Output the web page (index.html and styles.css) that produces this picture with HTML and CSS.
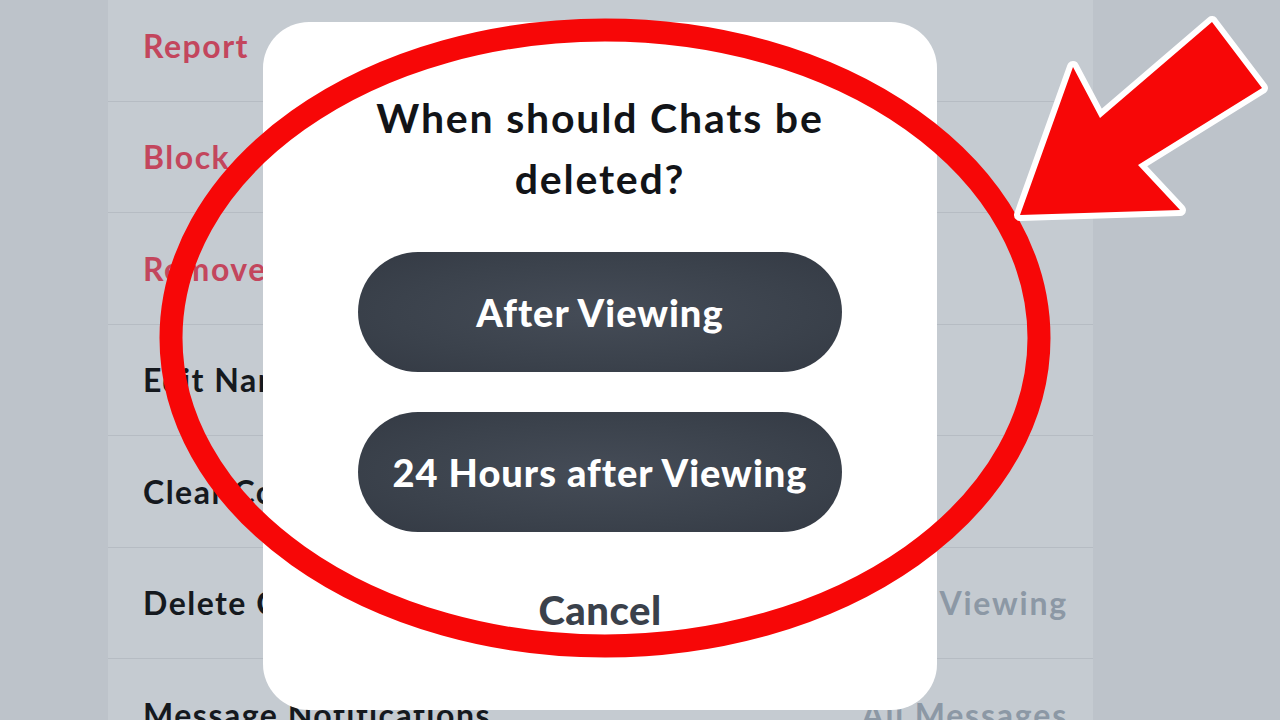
FILE: index.html
```html
<!DOCTYPE html>
<html>
<head>
    <title>Chat Settings</title>
    <link rel="stylesheet" href="styles.css">
</head>
<body>
    <div class="sheet">
        <div class="row danger">Report</div>
        <div class="row danger">Block</div>
        <div class="row danger">Remove Friend</div>
        <div class="row">Edit Name</div>
        <div class="row">Clear Conversation</div>
        <div class="row">Delete Chats <span class="value">After Viewing</span></div>
        <div class="row">Message Notifications <span class="value">All Messages</span></div>
    </div>

    <div class="dialog">
        <h2 class="dialog-title">When should Chats be<br>deleted?</h2>
        <div class="dialog-actions">
            <button type="button" class="pill">After Viewing</button>
            <button type="button" class="pill">24 Hours after Viewing</button>
        </div>
        <button type="button" class="cancel">Cancel</button>
    </div>

    <!-- annotation layer: circle + arrow -->
    <svg class="markup" viewBox="0 0 1280 720" width="1280" height="720">
        <ellipse cx="605" cy="338" rx="434" ry="308" fill="none" stroke="#f70707" stroke-width="23"/>
        <polygon points="1020,215 1073,67 1100,118 1212,22 1262,88 1138,165 1180,210"
                 fill="#f70707" stroke="#ffffff" stroke-width="12" stroke-linejoin="round" paint-order="stroke"/>
    </svg>
</body>
</html>
```

FILE: styles.css
```css
body {
    margin: 0;
    height: 720px;
    overflow: hidden;
    background-color: #bdc3ca;
    font-family: Lato, "Noto Sans", sans-serif;
    position: relative;
}

.sheet {
    width: 985px;
    margin: -10px 0 0 108px;
    background-color: #c5cbd1;
}

.row {
    height: 111.5px;
    box-sizing: border-box;
    padding: 0 25px 0 35px;
    display: flex;
    align-items: center;
    justify-content: space-between;
    border-bottom: 1.5px solid #b6bcc3;
    font-size: 32px;
    font-weight: 700;
    letter-spacing: 1.5px;
    color: #15191e;
}

.row.danger {
    color: #c3465d;
}

.value {
    color: #8c98a5;
    letter-spacing: 1.8px;
}

.dialog {
    position: absolute;
    left: 263px;
    top: 22px;
    width: 674px;
    height: 688px;
    box-sizing: border-box;
    background-color: #ffffff;
    border-radius: 46px;
    display: flex;
    flex-direction: column;
    align-items: center;
    padding-top: 65px;
}

.dialog-title {
    margin: 0;
    font-size: 41px;
    line-height: 61px;
    font-weight: 700;
    letter-spacing: 1.8px;
    color: #121418;
    text-align: center;
}

.dialog-actions {
    display: flex;
    flex-direction: column;
    gap: 40px;
    margin-top: 43px;
}

.pill {
    width: 484px;
    height: 120px;
    border: none;
    border-radius: 60px;
    background: radial-gradient(ellipse at center, #454c57 0%, #3b424c 60%, #343a44 100%);
    color: #ffffff;
    font-family: Lato, "Noto Sans", sans-serif;
    font-size: 38px;
    font-weight: 900;
    letter-spacing: 1px;
    cursor: pointer;
}

.cancel {
    margin-top: 53px;
    border: none;
    background: none;
    font-family: Lato, "Noto Sans", sans-serif;
    font-size: 40px;
    font-weight: 900;
    letter-spacing: 0.5px;
    color: #3a414b;
    cursor: pointer;
}

.markup {
    position: absolute;
    left: 0;
    top: 0;
    pointer-events: none;
}
```
